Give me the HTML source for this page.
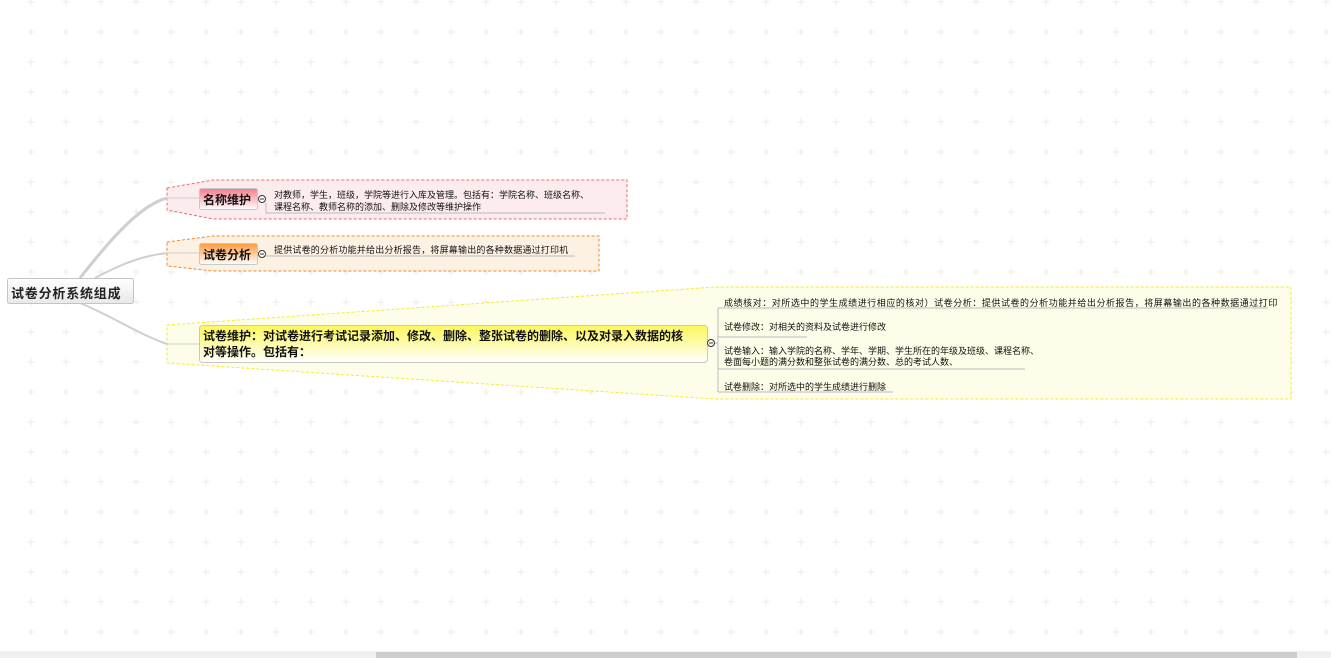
<!DOCTYPE html>
<html><head><meta charset="utf-8"><style>
body{margin:0;width:1331px;height:658px;overflow:hidden;background:#fff;font-family:"Liberation Sans","Noto Sans CJK SC",sans-serif;position:relative}
.t{position:absolute;white-space:nowrap;color:#111}
</style></head><body>
<svg width="1331" height="658" style="position:absolute;left:0;top:0">
<defs>
<pattern id="g" x="27" y="-2" width="35" height="30" patternUnits="userSpaceOnUse">
<path d="M4 0.5V7.5M0.5 4H7.5" stroke="#eeede2" stroke-width="1"/>
</pattern>
<linearGradient id="pk" x1="0" y1="0" x2="0" y2="1"><stop offset="0" stop-color="#f47c88"/><stop offset="1" stop-color="#fff"/></linearGradient>
<linearGradient id="or" x1="0" y1="0" x2="0" y2="1"><stop offset="0" stop-color="#fb9a3c"/><stop offset="1" stop-color="#fff"/></linearGradient>
<linearGradient id="ye" x1="0" y1="0" x2="0" y2="1"><stop offset="0" stop-color="#fdf75a"/><stop offset="1" stop-color="#fff"/></linearGradient>
<linearGradient id="rt" x1="0" y1="0" x2="0" y2="1"><stop offset="0" stop-color="#fff"/><stop offset="1" stop-color="#e8e8e8"/></linearGradient>
</defs>
<rect width="1331" height="650" fill="url(#g)"/>
<polygon points="167,188 213,180 627,180 627,219 213,219 167,210" fill="#fdeced" stroke="#ec6b78" stroke-dasharray="3,2"/>
<polygon points="167,242 213,236 599,236 599,271 213,271 167,266" fill="#fdf1e4" stroke="#f08a2c" stroke-dasharray="3,2"/>
<polygon points="167,325 715,287 1291,287 1291,399 715,399 167,363" fill="#fefde9" stroke="#f3ec2a" stroke-dasharray="3,2"/>
<path d="M80,278 C110,240 140,205 167,198" stroke="#cfcfcf" stroke-width="3" fill="none"/>
<path d="M95,278 C120,265 140,256 167,253" stroke="#cfcfcf" stroke-width="2" fill="none"/>
<path d="M80,303 C110,315 140,335 167,344" stroke="#cfcfcf" stroke-width="2" fill="none"/>
<path d="M167,198H199M167,253H199M167,344H199" stroke="#cfcfcf"/>
<rect x="7.5" y="278.5" width="126" height="25" rx="2" fill="url(#rt)" stroke="#c4c4c4"/>
<rect x="199.5" y="188.5" width="58" height="21" rx="2" fill="url(#pk)" stroke="#c8c8c8"/>
<rect x="199.5" y="243.5" width="58" height="21" rx="2" fill="url(#or)" stroke="#c8c8c8"/>
<rect x="199.5" y="325.5" width="508" height="37" rx="3" fill="url(#ye)" stroke="#c8c8c8"/>
<g fill="#fff" stroke="#333" stroke-width="1">
<circle cx="262" cy="199" r="3.5"/><circle cx="262" cy="254" r="3.5"/><circle cx="711" cy="343" r="3.5"/>
</g>
<path d="M260,199H264M260,254H264M709,343H713" stroke="#333"/>
<g stroke="#bbb" fill="none">
<path d="M266,203V213H605"/>
<path d="M266,254V256H575"/>
<path d="M715,343H718M718,308V392M718,308H1268M718,337H807M718,369H1025M718,392H893"/>
</g>
<rect x="0" y="651" width="1331" height="7" fill="#f0f0f0"/>
<rect x="376" y="652" width="921" height="6" fill="#cdcdcd"/>
</svg>
<div class="t" style="left:11px;top:283px;font-size:13px;font-weight:bold;color:#222;letter-spacing:0.8px">试卷分析系统组成</div>
<div class="t" style="left:203px;top:191px;font-size:12px;font-weight:bold">名称维护</div>
<div class="t" style="left:203px;top:246px;font-size:12px;font-weight:bold">试卷分析</div>
<div class="t" style="left:203px;top:328px;font-size:12px;font-weight:bold;line-height:16px">试卷维护：对试卷进行考试记录添加、修改、删除、整张试卷的删除、以及对录入数据的核<br>对等操作。包括有：</div>
<div class="t" style="left:274px;top:189px;font-size:9px;line-height:12px">对教师，学生，班级，学院等进行入库及管理。包括有：学院名称、班级名称、<br>课程名称、教师名称的添加、删除及修改等维护操作</div>
<div class="t" style="left:274px;top:244px;font-size:9px;line-height:12px;letter-spacing:0.2px">提供试卷的分析功能并给出分析报告，将屏幕输出的各种数据通过打印机</div>
<div class="t" style="left:724px;top:297px;font-size:9px;line-height:12px;letter-spacing:0.55px">成绩核对：对所选中的学生成绩进行相应的核对）试卷分析：提供试卷的分析功能并给出分析报告，将屏幕输出的各种数据通过打印</div>
<div class="t" style="left:724px;top:321px;font-size:9px;line-height:12px">试卷修改：对相关的资料及试卷进行修改</div>
<div class="t" style="left:724px;top:346px;font-size:9px;line-height:11px">试卷输入：输入学院的名称、学年、学期、学生所在的年级及班级、课程名称、<br>卷面每小题的满分数和整张试卷的满分数、总的考试人数、</div>
<div class="t" style="left:724px;top:381px;font-size:9px;line-height:12px">试卷删除：对所选中的学生成绩进行删除</div>
</body></html>
